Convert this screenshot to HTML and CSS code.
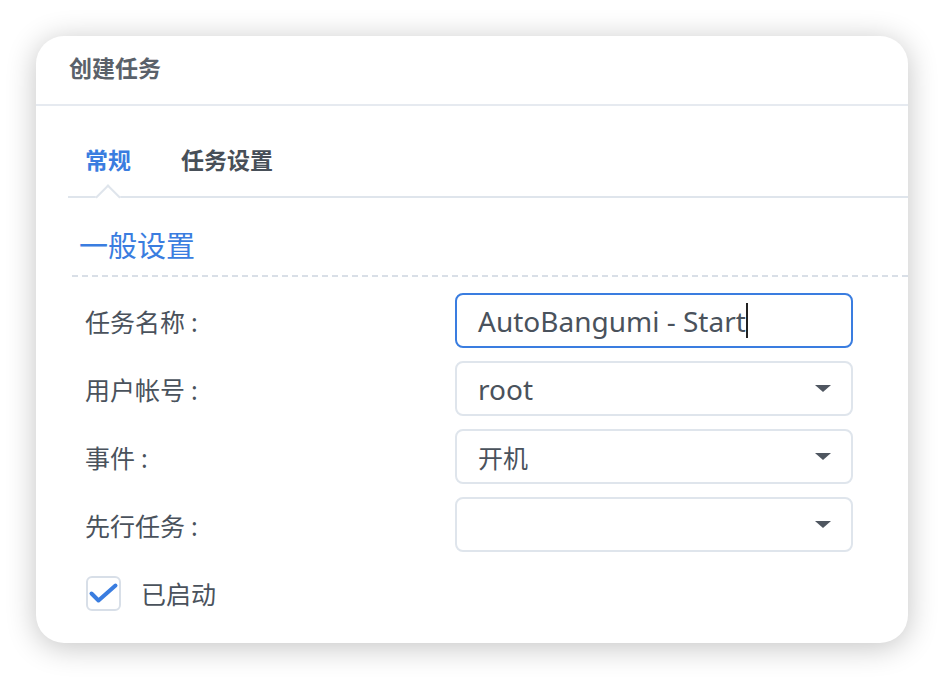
FILE: index.html
```html
<!DOCTYPE html>
<html lang="zh-CN">
<head>
<meta charset="utf-8">
<link rel="stylesheet" href="styles.css">
</head>
<body>
<div class="dialog">
  <div class="header">创建任务</div>
  <div class="content">
    <div class="tabs">
      <div class="tab active">常规</div>
      <div class="tab">任务设置</div>
    </div>
    <div class="section-title">一般设置</div>
    <div class="form">
      <div class="row">
        <div class="label">任务名称<span class="colon">:</span></div>
        <div class="field focused"><span class="value">AutoBangumi - Start</span><span class="cursor"></span></div>
      </div>
      <div class="row">
        <div class="label">用户帐号<span class="colon">:</span></div>
        <div class="field select"><span class="value">root</span><span class="arrow"></span></div>
      </div>
      <div class="row">
        <div class="label">事件<span class="colon">:</span></div>
        <div class="field select"><span class="value cjk">开机</span><span class="arrow"></span></div>
      </div>
      <div class="row">
        <div class="label">先行任务<span class="colon">:</span></div>
        <div class="field select"><span class="value"></span><span class="arrow"></span></div>
      </div>
      <div class="check-row">
        <span class="checkbox">
          <svg width="31" height="31" viewBox="0 0 31 31"><path d="M3.5 15.5 L10.5 22.5 L27.5 7.5" fill="none" stroke="#3a7de0" stroke-width="4" stroke-linecap="round" stroke-linejoin="round"/></svg>
        </span>
        <span class="check-label">已启动</span>
      </div>
    </div>
  </div>
</div>
</body>
</html>
```
FILE: styles.css
```css
html, body {
  margin: 0;
  padding: 0;
  background: #ffffff;
}
body {
  font-family: "Noto Sans", "Noto Sans CJK SC", sans-serif;
  color: #4a525c;
  padding: 36px;
}
.dialog {
  width: 872px;
  height: 607px;
  background: #fff;
  border-radius: 28px;
  box-shadow: 0 4px 30px rgba(0, 0, 0, 0.24);
  overflow: hidden;
}
.header {
  height: 70px;
  box-sizing: border-box;
  border-bottom: 2px solid #e6eaf0;
  padding-left: 33px;
  padding-bottom: 6px;
  display: flex;
  align-items: center;
  font-size: 23px;
  font-weight: 700;
  color: #5a616a;
}
.content {
  padding-left: 32px;
}
.tabs {
  height: 92px;
  box-sizing: border-box;
  border-bottom: 2px solid #dfe5ec;
  display: flex;
  gap: 50px;
  padding-left: 17px;
}
.tab {
  font-size: 23px;
  font-weight: 700;
  color: #474f58;
  position: relative;
  height: 90px;
  box-sizing: border-box;
  padding-top: 38px;
  line-height: 32px;
}
.tab.active {
  color: #3a7de0;
}
.tab.active::after {
  content: "";
  position: absolute;
  left: 50%;
  bottom: -10px;
  width: 18px;
  height: 18px;
  margin-left: -9px;
  box-sizing: border-box;
  background: #fff;
  border-left: 2px solid #dfe5ec;
  border-top: 2px solid #dfe5ec;
  transform: rotate(45deg);
}
.section-title {
  margin-left: 4px;
  height: 79px;
  box-sizing: border-box;
  padding-top: 32px;
  padding-left: 7px;
  font-size: 29px;
  line-height: 32px;
  color: #3a7de0;
  background: repeating-linear-gradient(90deg, #d9dfe7 0 6px, transparent 6px 10px) left bottom / 100% 2px no-repeat;
}
.form {
  padding-left: 17px;
  padding-top: 16px;
  display: flex;
  flex-direction: column;
  gap: 13px;
}
.row {
  display: flex;
  align-items: center;
  height: 55px;
}
.label {
  width: 370px;
  font-size: 25px;
  color: #4a525c;
}
.colon {
  margin-left: 6px;
}
.field {
  width: 398px;
  height: 55px;
  box-sizing: border-box;
  border: 2px solid #dfe5ec;
  border-radius: 8px;
  display: flex;
  align-items: center;
  padding-left: 21px;
  padding-right: 20px;
  font-size: 28px;
  color: #4a525c;
}
.field.focused {
  border-color: #3a7de0;
}
.cursor {
  display: inline-block;
  width: 2px;
  height: 35px;
  background: #222;
  margin-left: 0;
}
.field .value {
  flex: 0 0 auto;
}
.field .value.cjk {
  font-size: 25px;
}
.field.select .value {
  flex: 1;
}
.arrow {
  width: 0;
  height: 0;
  border-left: 8px solid transparent;
  border-right: 8px solid transparent;
  border-top: 7px solid #4f5660;
}
.check-row {
  display: flex;
  align-items: center;
  gap: 20px;
  margin-top: 10px;
  padding-left: 1px;
}
.checkbox {
  width: 35px;
  height: 35px;
  box-sizing: border-box;
  border: 2px solid #d8dfe8;
  border-radius: 6px;
  display: flex;
  align-items: center;
  justify-content: center;
}
.check-label {
  font-size: 25px;
  color: #4a525c;
}
```
